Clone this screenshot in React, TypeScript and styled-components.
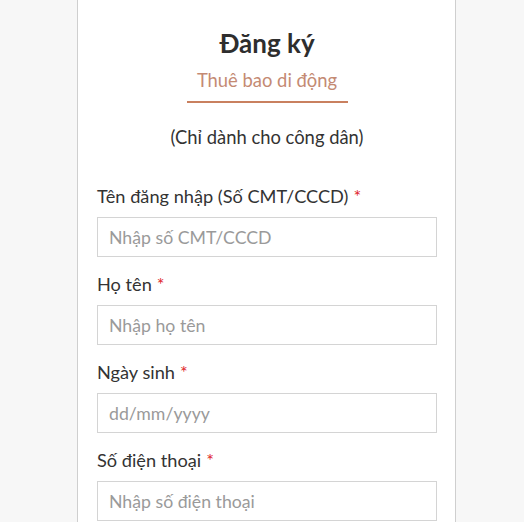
import styled, { createGlobalStyle } from 'styled-components';

const GlobalStyle = createGlobalStyle`
  html, body {
    margin: 0;
    padding: 0;
    background: #f7f7f7;
  }
  body {
    font-family: 'Lato', 'Noto Sans', sans-serif;
    color: #333;
  }
`;

//#region styled component
const Page = styled.main`
  min-height: 522px;
  padding-left: 77px;
`;

const Card = styled.section`
  width: 340px;
  min-height: 522px;
  box-sizing: content-box;
  background: #fff;
  border: 1px solid #cfcfcf;
  border-top: 0;
  padding: 27px 18px 0 19px;
  display: flex;
  flex-direction: column;
  align-items: center;
`;

const Title = styled.h1`
  margin: 0;
  font-size: 26px;
  line-height: 32px;
  font-weight: 700;
  color: #2e2e2e;
`;

const Tab = styled.div`
  margin-top: 9px;
  width: 161px;
  padding-bottom: 9px;
  border-bottom: 2px solid #c9805f;
  text-align: center;
  font-size: 18.4px;
  line-height: 24px;
  color: #c48a73;
`;

const Note = styled.p`
  margin: 22px 0 0;
  font-size: 18.4px;
  line-height: 24px;
  color: #333;
`;

const Form = styled.form`
  align-self: stretch;
  margin-top: 35px;
  display: flex;
  flex-direction: column;
`;

const Field = styled.div`
  display: flex;
  flex-direction: column;
  margin-bottom: 15px;
`;

const Label = styled.label`
  font-size: 18.2px;
  line-height: 24px;
  color: #333;
  margin-bottom: 9px;
`;

const Required = styled.span`
  color: #e0262b;
  margin-left: 5px;
`;

const Input = styled.input`
  box-sizing: border-box;
  width: 100%;
  height: 40px;
  padding: 0 11px;
  border: 1px solid #d4d4d4;
  border-radius: 0;
  font-family: inherit;
  font-size: 17.7px;
  color: #333;
  outline: none;

  &::placeholder {
    color: #9a9a9a;
  }
`;
//#endregion

const fields = [
  { id: 'cccd', label: 'Tên đăng nhập (Số CMT/CCCD)', placeholder: 'Nhập số CMT/CCCD' },
  { id: 'name', label: 'Họ tên', placeholder: 'Nhập họ tên' },
  { id: 'dob', label: 'Ngày sinh', placeholder: 'dd/mm/yyyy' },
  { id: 'phone', label: 'Số điện thoại', placeholder: 'Nhập số điện thoại' },
];

function App() {
  return (
    <>
      <GlobalStyle />
      <Page>
        <Card>
          <Title>Đăng ký</Title>
          <Tab>Thuê bao di động</Tab>
          <Note>(Chỉ dành cho công dân)</Note>

          <Form onSubmit={(e) => e.preventDefault()}>
            {fields.map((f) => (
              <Field key={f.id}>
                <Label htmlFor={f.id}>
                  {f.label}
                  <Required>*</Required>
                </Label>
                <Input id={f.id} placeholder={f.placeholder} />
              </Field>
            ))}
          </Form>
        </Card>
      </Page>
    </>
  );
}

export default App;
